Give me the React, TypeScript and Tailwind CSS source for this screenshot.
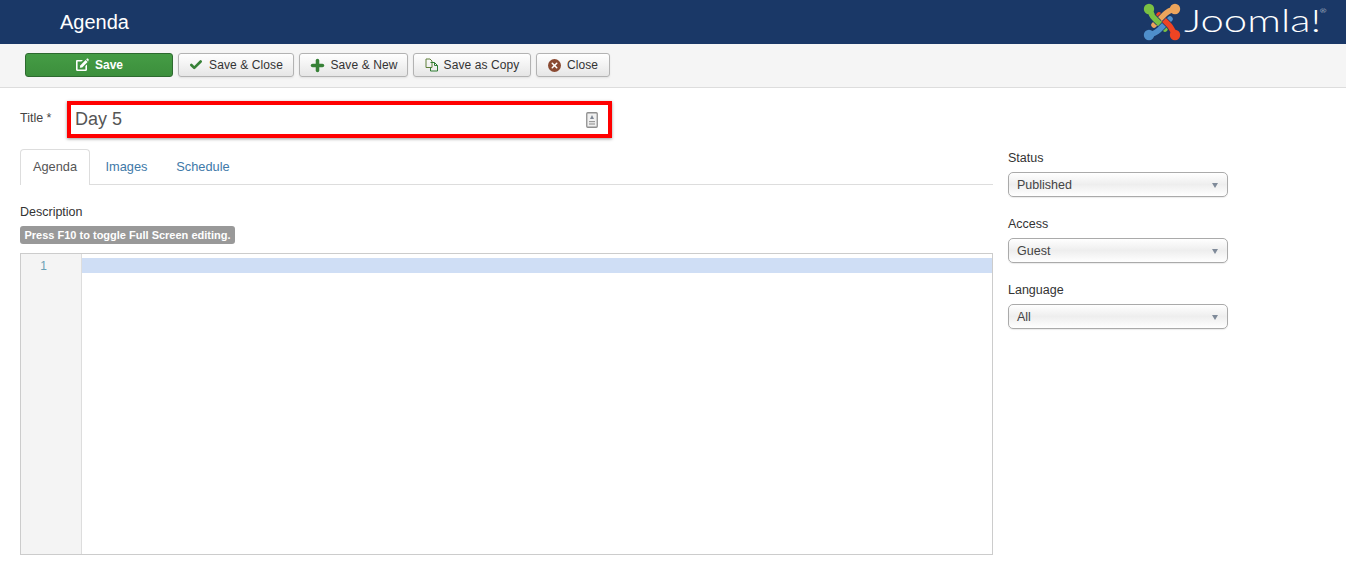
import React from "react";
import { Check, Plus, X } from "lucide-react";
import { clsx } from "clsx";

const toolbarBtn =
  "h-[24px] flex items-center justify-center rounded-[3px] border border-[#b3b3b3] bg-gradient-to-b from-[#ffffff] to-[#e6e6e6] text-[12px] text-[#333333] tracking-[0.1px] shadow-[0_1px_2px_rgba(0,0,0,0.08)]";

const EditIcon = () => (
  <svg width="14" height="14" viewBox="0 0 14 14" className="mr-[6px]">
    <path d="M1 3.2C1 2.5 1.5 2 2.2 2H8L6.4 3.6H2.6V11.4H10.4V8L12 6.4V11.8C12 12.5 11.5 13 10.8 13H2.2C1.5 13 1 12.5 1 11.8Z" fill="#fff" />
    <path d="M5.2 7.4L10.6 2L12.6 4L7.2 9.4L4.8 9.8Z" fill="#fff" />
    <path d="M11.2 1.4L12 0.6C12.3 0.4 12.6 0.4 12.9 0.6L13.6 1.3C13.8 1.6 13.8 1.9 13.6 2.2L13.2 3.4Z" fill="#fff" />
  </svg>
);

const CopyIcon = () => (
  <svg width="14" height="14" viewBox="0 0 14 14" className="mr-[5px]" fill="none">
    <path d="M1 1H5L7 3V9.5H1Z" stroke="#5f7f3a" strokeWidth="1" />
    <path d="M5.5 4.5H9.5L12.5 7.5V13H5.5V9.5" stroke="#2f7d32" strokeWidth="1" />
    <path d="M9.5 4.5V7.5H12.5" stroke="#2f7d32" strokeWidth="1" />
  </svg>
);

// four woven strands round a small diamond hole, navy casing under each overlap
const JoomlaMark = () => (
  <svg width="38" height="38" viewBox="0 0 38 38" fill="none" strokeLinecap="round" strokeLinejoin="round">
    <path d="M6 6C8 10 10 14 12 16L22 26" stroke="#7ac143" strokeWidth="5.5" />
    <circle cx="6" cy="6" r="5.2" fill="#7ac143" />
    <path d="M6 32C10 31 13 30 16 27L27 16" stroke="#1a3867" strokeWidth="7" />
    <path d="M6 32C10 31 13 30 16 27L27 16" stroke="#4f8fcb" strokeWidth="5.5" />
    <circle cx="6" cy="32" r="5.2" fill="#4f8fcb" />
    <path d="M32 32C30 28 28 24 26 22L16 12" stroke="#1a3867" strokeWidth="7" />
    <path d="M32 32C30 28 28 24 26 22L16 12" stroke="#ee4423" strokeWidth="5.5" />
    <circle cx="32" cy="32" r="5.2" fill="#ee4423" />
    <path d="M32 6C28 7 25 8 22 11L11 22" stroke="#1a3867" strokeWidth="7" />
    <path d="M32 6C28 7 25 8 22 11L11 22" stroke="#eba45c" strokeWidth="5.5" />
    <circle cx="32" cy="6" r="5.2" fill="#eba45c" />
    <path d="M9 13L16 20" stroke="#1a3867" strokeWidth="7" strokeLinecap="butt" />
    <path d="M8 10.5C9 13 10.5 14.5 12 16L17 21" stroke="#7ac143" strokeWidth="5.5" strokeLinecap="butt" />
  </svg>
);

const TitleIcon = () => (
  <svg width="12" height="16" viewBox="0 0 12 16" fill="none">
    <rect x="0.75" y="0.75" width="10.5" height="14.5" rx="1" stroke="#8f8f8f" strokeWidth="1.3" fill="#f0f0f0" />
    <path d="M6 3L8 7H4Z" fill="#7f8794" />
    <rect x="3" y="9" width="6" height="1.2" fill="#9a9a9a" />
    <rect x="3" y="11.4" width="6" height="1.2" fill="#9a9a9a" />
  </svg>
);

const Field = ({ label, value, className }: { label: string; value: string; className?: string }) => (
  <div className={className}>
    <div className="text-[12.5px] leading-[18px] pt-[1px] text-[#333333] mb-[5px]">{label}</div>
    <div className="h-[25px] flex items-center justify-between pl-[8px] pr-[9px] pt-[1px] rounded-[5px] border border-[#aaaaaa] bg-gradient-to-b from-[#ffffff] via-[#eeeeee] to-[#ffffff] text-[12.5px] text-[#444444] shadow-[0_1px_1px_rgba(0,0,0,0.08)]">
      <span>{value}</span>
      <span className="w-0 h-0 border-l-[3.5px] border-r-[3.5px] border-t-[5px] border-l-transparent border-r-transparent border-t-[#7f8a99]" />
    </div>
  </div>
);

export default function App() {
  return (
    <div className="w-[1346px] h-[563px] overflow-hidden bg-white font-['Liberation_Sans',Arial,sans-serif]">
      <header className="h-[44px] bg-[#1a3867] flex items-center justify-between pl-[60px] pr-[60px]">
        <h1 className="text-[20px] text-white -mt-[1px]">Agenda</h1>
        <div className="flex items-center gap-[3px]">
          <JoomlaMark />
          <span className="font-['Lato',sans-serif] font-light text-[31px] leading-none -mt-[3px] text-white relative origin-left scale-x-[1.35] whitespace-nowrap">
            Joomla!
            <sup className="absolute -right-[4px] top-[3px] text-[6px] leading-none">®</sup>
          </span>
        </div>
      </header>

      <div className="h-[44px] bg-[#f5f5f5] border-b border-[#dddddd] flex items-start pt-[9px] pl-[25px] gap-[5px]">
        <button className="w-[148px] h-[24px] flex items-center justify-center rounded-[3px] border border-[#2d6a2f] bg-gradient-to-b from-[#459c45] to-[#3c8f3c] text-white text-[12px] font-bold">
          <EditIcon />
          Save
        </button>
        <button className={clsx(toolbarBtn, "w-[116px]")}>
          <Check size={14} strokeWidth={4.5} className="text-[#378137] mr-[6px]" />
          Save &amp; Close
        </button>
        <button className={clsx(toolbarBtn, "w-[109px]")}>
          <Plus size={17} strokeWidth={5} className="text-[#378137] mr-[4px]" />
          Save &amp; New
        </button>
        <button className={clsx(toolbarBtn, "w-[118px]")}>
          <CopyIcon />
          Save as Copy
        </button>
        <button className={clsx(toolbarBtn, "w-[74px]")}>
          <span className="w-[13px] h-[13px] rounded-full bg-[#8a4a32] flex items-center justify-center mr-[6px]">
            <X size={9} strokeWidth={4} className="text-white" />
          </span>
          Close
        </button>
      </div>

      <div className="flex items-start pl-[20px] pt-[13px]">
        <label className="w-[47px] text-[12.5px] leading-[18px] pt-[8px] text-[#444444]">Title *</label>
        <div className="w-[545px] h-[37px] border-[4px] border-[#ff0000] bg-white flex items-center justify-between pl-[4px] pr-[10px] shadow-[0_1px_3px_rgba(0,0,0,0.4)]">
          <span className="text-[18px] text-[#555555]">Day 5</span>
          <TitleIcon />
        </div>
      </div>

      <div className="flex items-start pl-[20px] pt-[11px] gap-[15px]">
        <div className="w-[973px]">
          <div className="h-[36px] flex border-b border-[#dddddd] text-[12.8px]">
            <div className="w-[70px] h-[36px] pb-[1px] flex items-center justify-center bg-white border border-b-0 border-[#dddddd] rounded-t-[4px] text-[#555555]">
              Agenda
            </div>
            <div className="w-[73px] pt-[1px] flex items-center justify-center text-[#4079a8]">Images</div>
            <div className="w-[80px] pt-[1px] flex items-center justify-center text-[#4079a8]">Schedule</div>
          </div>
          <div className="mt-[18px] text-[12.5px] leading-[18px] text-[#333333]">Description</div>
          <div className="mt-[5px] w-[215px] h-[18px] rounded-[3px] bg-[#999999] flex items-center justify-center text-white text-[11px] font-bold whitespace-nowrap">
            Press F10 to toggle Full Screen editing.
          </div>
          <div className="mt-[9px] h-[302px] border border-[#cccccc] flex">
            <div className="w-[61px] bg-[#f4f4f4] border-r border-[#dddddd] pt-[5px] pr-[34px] text-right text-[12px] leading-[15px] text-[#6a9fb5]">
              1
            </div>
            <div className="flex-1 pt-[4px]">
              <div className="h-[15px] bg-[#cfdef5]" />
            </div>
          </div>
        </div>

        <div className="w-[220px] -mt-[1px]">
          <Field label="Status" value="Published" />
          <Field label="Access" value="Guest" className="mt-[17px]" />
          <Field label="Language" value="All" className="mt-[17px]" />
        </div>
      </div>
    </div>
  );
}
